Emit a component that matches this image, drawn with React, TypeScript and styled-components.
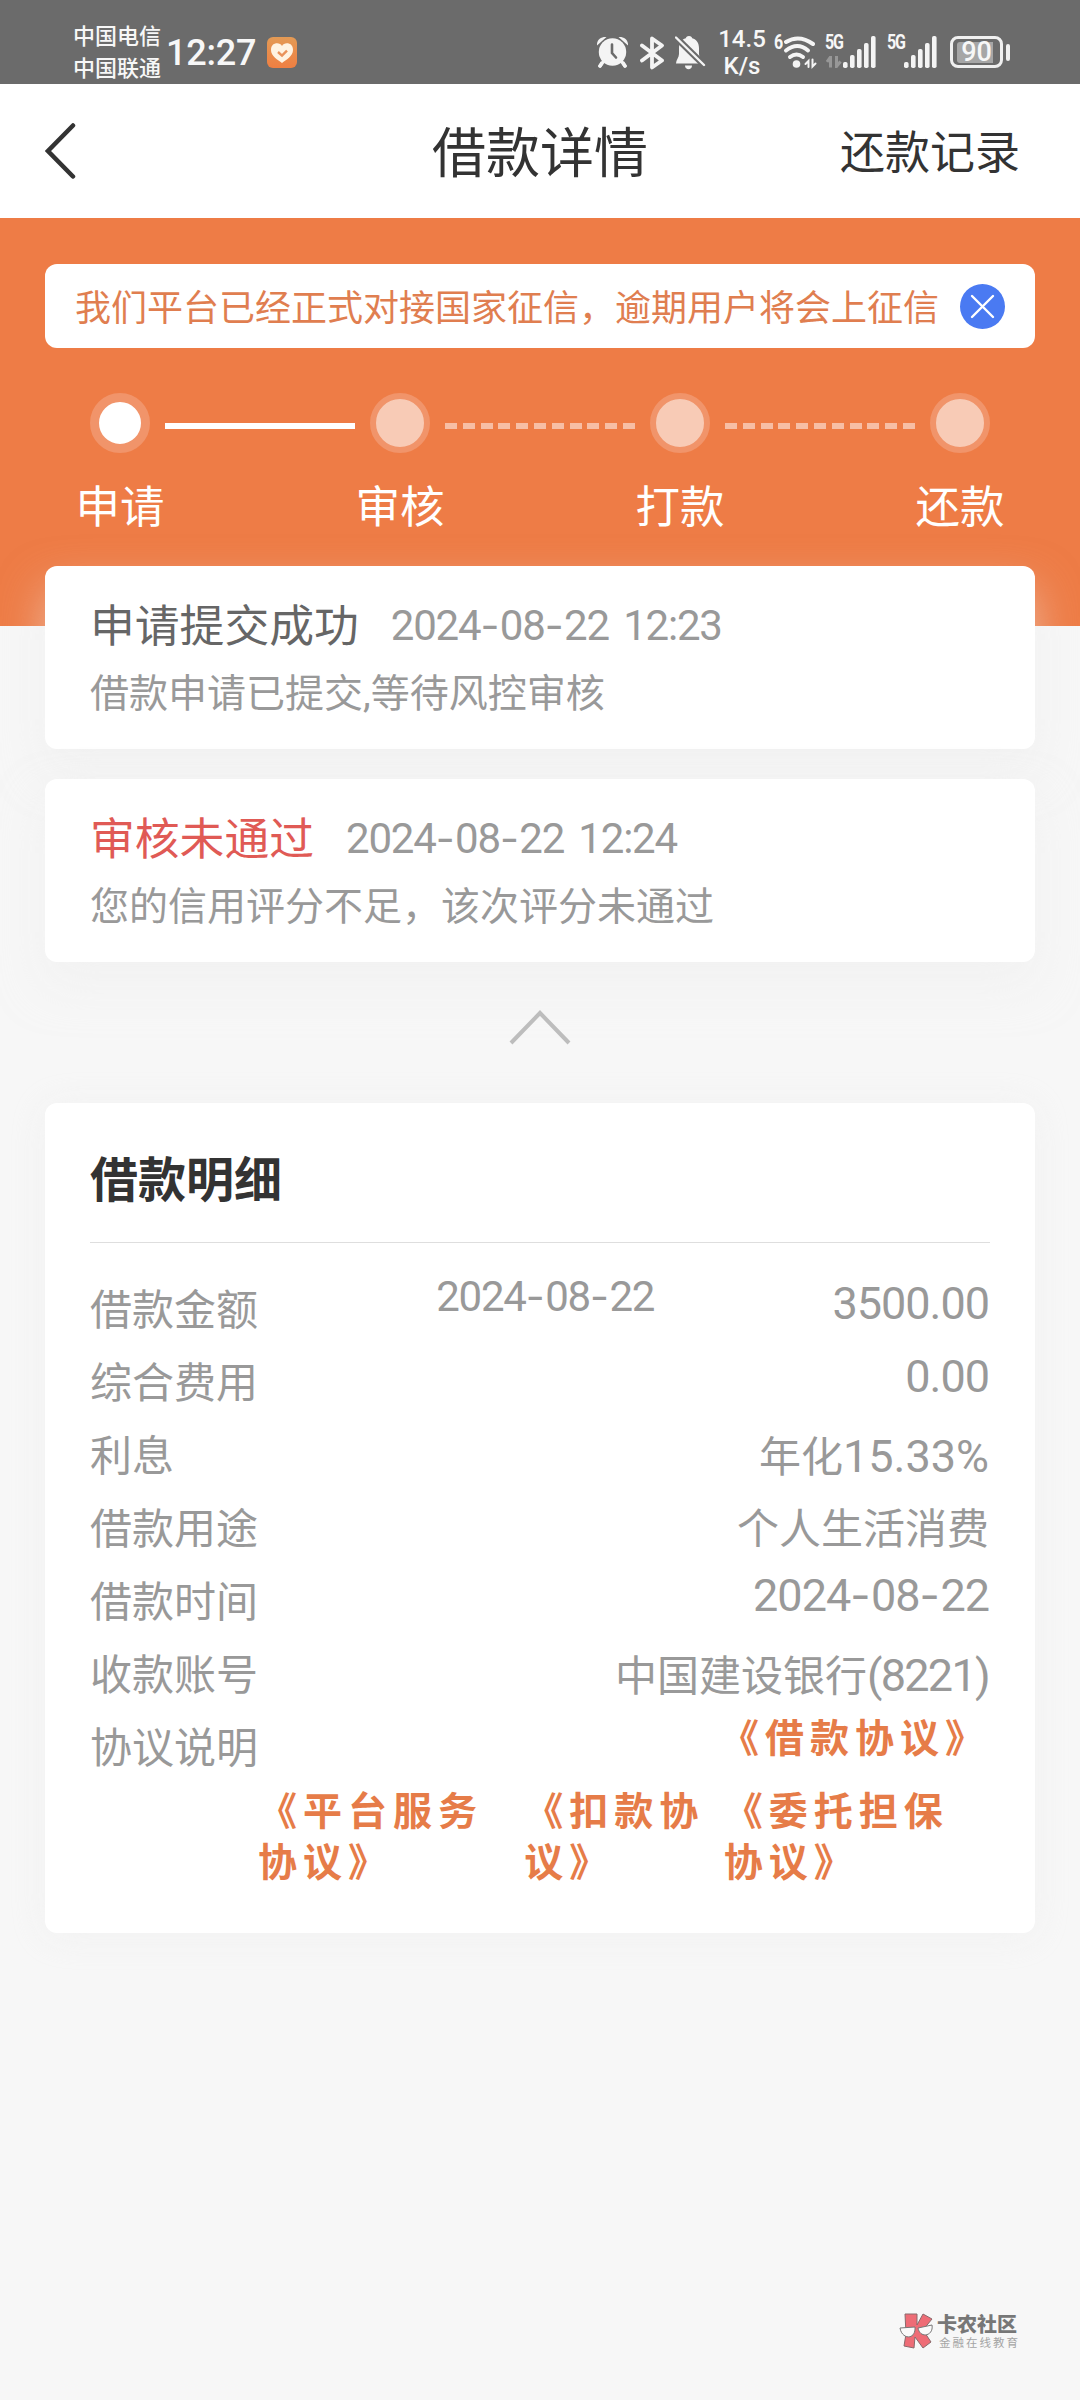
import React from "react";
import styled, { createGlobalStyle } from "styled-components";

const GlobalStyle = createGlobalStyle`
  * { box-sizing: border-box; }
  body {
    margin: 0;
    background: #f7f7f7;
    font-family: Roboto, "Noto Sans CJK SC", sans-serif;
    -webkit-font-smoothing: antialiased;
  }
`;

const Page = styled.div`
  width: 1080px;
  height: 2400px;
  display: flex;
  flex-direction: column;
  background: #f7f7f7;
  overflow: hidden;
`;

/* ---------- status bar ---------- */

const StatusBar = styled.header`
  height: 84px;
  flex: none;
  display: flex;
  align-items: flex-start;
  padding: 0 70px 0 73px;
  background: #6b6b6b;
  color: #f7f7f7;
`;

const Carriers = styled.div`
  display: flex;
  flex-direction: column;
  width: 93px;
  padding-top: 18px;
  font: 500 22px/32px "Noto Sans CJK SC", sans-serif;
  white-space: nowrap;
`;

const Clock = styled.div`
  width: 101px;
  padding-top: 33px;
  font-size: 36px;
  font-weight: 500;
  line-height: 40px;
  letter-spacing: -0.2px;
  white-space: nowrap;
`;

const StatusIcon = styled.svg<{ $top?: number; $left?: number }>`
  display: block;
  flex: none;
  margin-top: ${(p) => p.$top ?? 36}px;
  margin-left: ${(p) => p.$left ?? 0}px;
`;

const StatusIcons = styled.div`
  display: flex;
  align-items: flex-start;
  margin-left: auto;
`;

const Speed = styled.div`
  width: 50px;
  margin-left: 11px;
  padding-top: 26px;
  font-size: 24px;
  font-weight: 500;
  line-height: 27px;
  text-align: center;
  white-space: nowrap;
`;

const NetTag = styled.div<{ $width: number; $left: number }>`
  width: ${(p) => p.$width}px;
  margin: 34px 0 0 ${(p) => p.$left}px;
  font-size: 16px;
  line-height: 18px;
  font-weight: 700;
  letter-spacing: -1.2px;
  white-space: nowrap;
  transform: scaleY(1.25);
`;

const TagColumn = styled.div`
  display: flex;
  flex-direction: column;
`;

const Battery = styled.div`
  display: flex;
  align-items: center;
  justify-content: center;
  width: 53px;
  height: 32px;
  margin: 36px 3px 0 13px;
  border: 3px solid #f0f0f0;
  border-radius: 8px;
  font-size: 27px;
  font-weight: 500;
  line-height: 27px;
`;

const BatteryFill = styled.span`
  display: flex;
  align-items: center;
  justify-content: center;
  width: 39px;
  height: 21px;
  border-radius: 3px;
  background: linear-gradient(90deg, #a6a6a6 92%, transparent 92%);
`;

const BatteryTip = styled.div`
  width: 4px;
  height: 17px;
  margin-top: 44px;
  border-radius: 2px;
  background: #f0f0f0;
`;

/* ---------- navigation ---------- */

const NavBar = styled.nav`
  height: 134px;
  flex: none;
  display: grid;
  grid-template-columns: 300px 1fr 300px;
  align-items: center;
  background: #fff;
  color: #333;
`;

const BackButton = styled.button`
  display: flex;
  padding: 0 0 0 45px;
  border: 0;
  background: none;
`;

const NavTitle = styled.h1`
  margin: 0;
  padding-top: 7px;
  font-weight: 400;
  font-size: 54px;
  line-height: 60px;
  text-align: center;
`;

const NavLink = styled.a`
  padding: 6px 60px 0 0;
  font-size: 45px;
  line-height: 60px;
  text-align: right;
`;

/* ---------- hero ---------- */

const Hero = styled.section`
  height: 408px;
  flex: none;
  padding: 46px 45px 0;
  background: #ee7c46;
`;

const Notice = styled.div`
  display: flex;
  align-items: center;
  justify-content: space-between;
  height: 84px;
  padding: 0 30px;
  border-radius: 12px;
  background: #fff;
  color: #e07e50;
  font-size: 36px;
  line-height: 50px;
  white-space: nowrap;
`;

const NoticeText = styled.span`
  padding-top: 5px;
`;

const Steps = styled.div`
  display: flex;
  align-items: flex-start;
  padding: 45px 45px 0;
`;

const Step = styled.div`
  display: flex;
  flex-direction: column;
  align-items: center;
  width: 60px;
`;

const StepDot = styled.div<{ $active?: boolean }>`
  width: 60px;
  height: 60px;
  border-radius: 50%;
  border: ${(p) => (p.$active ? 9 : 6)}px solid #f1946a;
  background: ${(p) => (p.$active ? "#fff" : "#f8cbb6")};
`;

const StepLabel = styled.div`
  margin-top: 25px;
  color: #fff;
  font-size: 44.5px;
  line-height: 60px;
  white-space: nowrap;
`;

const StepLine = styled.div<{ $active?: boolean }>`
  width: 190px;
  height: 6px;
  margin: 30px 15px 0;
  background: ${(p) =>
    p.$active
      ? "#fff"
      : "repeating-linear-gradient(90deg, #f7bea5 0 12px, transparent 12px 17.8px)"};
`;

/* ---------- progress records ---------- */

const Records = styled.section`
  display: flex;
  flex-direction: column;
  gap: 30px;
  margin: -60px 45px 0;
`;

const cardShadow = "0 22px 45px rgba(238, 238, 238, 0.5)";

const RecordCard = styled.article`
  height: 183px;
  padding: 32px 45px 0;
  border-radius: 12px;
  background: #fff;
  box-shadow: ${cardShadow};
`;

const RecordHead = styled.div`
  display: flex;
  align-items: center;
  gap: 32px;
  height: 54px;
`;

const RecordTitle = styled.h2<{ $failed?: boolean }>`
  margin: 0;
  padding-top: 3px;
  font-weight: 400;
  font-size: 44.8px;
  line-height: 54px;
  color: ${(p) => (p.$failed ? "#e05a55" : "#666")};
`;

const Stamp = styled.time`
  font-size: 42px;
  line-height: 48px;
  letter-spacing: -1.2px;
  word-spacing: 5px;
  color: #999;
  white-space: nowrap;
`;

const Dash = styled.span`
  font-family: Inter, sans-serif;
  font-weight: 400;
  font-size: 0.98em;
  letter-spacing: 0.5px;
`;

const RecordText = styled.p`
  margin: 18px 0 0;
  color: #999;
  font-size: 39px;
  line-height: 48px;
  white-space: nowrap;
`;

const Collapse = styled.div`
  display: flex;
  justify-content: center;
  height: 141px;
  padding-top: 48px;
`;

/* ---------- loan details ---------- */

const DetailCard = styled.section`
  height: 830px;
  margin: 0 45px;
  padding: 0 45px;
  border-radius: 12px;
  background: #fff;
  box-shadow: 0 3px 36px rgba(238, 238, 238, 0.6);
`;

const DetailTitle = styled.h2`
  height: 140px;
  margin: 0 0 29px;
  padding-top: 40px;
  border-bottom: 1px solid #dedede;
  color: #333;
  font: 700 48px/66px "Noto Sans CJK SC", sans-serif;
`;

const Row = styled.div`
  display: flex;
  align-items: flex-start;
  justify-content: space-between;
  height: 73px;
  color: #999;
`;

const Label = styled.div`
  width: 168px;
  flex: none;
  font-size: 42px;
  line-height: 78px;
  white-space: nowrap;
`;

const Value = styled.div<{ $numeric?: boolean }>`
  padding-right: 1px;
  font-size: 42px;
  line-height: ${(p) => (p.$numeric ? 63 : 77)}px;
  white-space: nowrap;
`;

const Num = styled.span<{ $track?: number }>`
  font-size: 45px;
  letter-spacing: ${(p) => p.$track ?? -1}px;
`;

const Agreement = styled.a`
  color: #e67c48;
  font: 700 39px/51px "Noto Sans CJK SC", sans-serif;
  letter-spacing: 6px;
`;

const AgreementRow = styled.div`
  display: flex;
  padding-left: 168px;
`;

const AgreementCell = styled.div<{ $basis: number }>`
  flex: 0 1 ${(p) => p.$basis}px;
  min-width: 0;
`;

/* ---------- watermark ---------- */

const Watermark = styled.footer`
  display: flex;
  gap: 2px;
  margin: auto 60px 51px auto;
`;

const BrandText = styled.div`
  display: flex;
  flex-direction: column;
  white-space: nowrap;
`;

const BrandName = styled.div`
  color: #777;
  font: 900 20px/22px "Noto Sans CJK SC", sans-serif;
`;

const BrandSlogan = styled.div`
  padding-left: 2px;
  color: #a5a5a5;
  font: 400 11.5px/14px "Noto Sans CJK SC", sans-serif;
  letter-spacing: 2px;
`;

const INK = "#f4f4f4";

const DateText = ({ value }: { value: string }) => (
  <>
    {value.split("-").map((part, i) => (
      <React.Fragment key={i}>
        {i > 0 && <Dash>-</Dash>}
        {part}
      </React.Fragment>
    ))}
  </>
);

const SignalBars = ({ left }: { left: number }) => (
  <StatusIcon width="33" height="32" $left={left} fill={INK}>
    {[6, 13, 19, 25, 32].map((h, i) => (
      <rect key={h} x={i * 7} y={32 - h} width="4.6" height={h} rx="1.8" />
    ))}
  </StatusIcon>
);

const steps = ["申请", "审核", "打款", "还款"];

const records = [
  { title: "申请提交成功", time: "2024-08-22 12:23", text: "借款申请已提交,等待风控审核" },
  { title: "审核未通过", time: "2024-08-22 12:24", text: "您的信用评分不足，该次评分未通过", failed: true },
];

export default function App() {
  return (
    <Page>
      <GlobalStyle />
      <StatusBar>
        <Carriers>
          <span>中国电信</span>
          <span>中国联通</span>
        </Carriers>
        <Clock>12:27</Clock>
        <StatusIcon width="30" height="31" $top={37}>
          <defs>
            <linearGradient id="badge" x1="0" y1="0" x2="0" y2="1">
              <stop offset="0" stopColor="#e39a55" />
              <stop offset="1" stopColor="#ef7f42" />
            </linearGradient>
          </defs>
          <rect width="30" height="31" rx="6" fill="url(#badge)" />
          <path d="M15 9C13 5 4 5 4 13c0 6 7 10 11 13 4-3 11-7 11-13 0-8-9-8-11-4z" fill="#fff3e2" />
          <path d="M11 15l4 3.6 5-5" fill="none" stroke="#e9925a" strokeWidth="2.4" />
        </StatusIcon>
        <StatusIcons>
          <StatusIcon width="31" height="32" viewBox="0 0 31 32">
            <path d="M5.500 26l-2.500 4M25.500 26l2.500 4" stroke={INK} strokeWidth="3.400" strokeLinecap="round" />
            <path d="M0 9.500C-.5 4 4 .5 9.500 1L0 9.500zM31 9.500C31.500 4 27 .5 21.500 1L31 9.500z" fill={INK} />
            <circle cx="15.500" cy="16.500" r="14.800" fill="#6b6b6b" />
            <path d="M6 26l-3 4M25 26l3 4" stroke={INK} strokeWidth="3.400" strokeLinecap="round" />
            <circle cx="15.500" cy="16" r="13.700" fill={INK} />
            <path d="M15 8.500V17l4 4.500" fill="none" stroke="#6b6b6b" strokeWidth="2.600" strokeLinecap="round" />
          </StatusIcon>
          <StatusIcon width="24" height="34" viewBox="0 0 24 34" $left={12}>
            <path
              d="M2 9.500l20 15-10 7V2.500l10 7-20 15"
              fill="none"
              stroke={INK}
              strokeWidth="3.800"
              strokeLinejoin="round"
              strokeLinecap="round"
            />
          </StatusIcon>
          <StatusIcon width="31" height="34" viewBox="0 0 31 34" $left={11}>
            <path d="M14 0c2 0 3 1 3.200 2.300C21.500 3.500 24 7 24 12v6c0 3.500 2.500 6 3 9.500H1C1 24 4 21.500 4 18v-6c0-5 2.500-8.500 6.800-9.700C11 1 12 0 14 0z" fill={INK} />
            <path d="M10 29.500h7c0 5-7 5-7 0z" fill={INK} />
            <path d="M1 1.500l28 27.500" stroke="#6b6b6b" strokeWidth="6.500" />
            <path d="M1 1.500l28 27.500" stroke={INK} strokeWidth="2.400" strokeLinecap="round" />
          </StatusIcon>
          <Speed>
            14.5
            <br />
            K/s
          </Speed>
          <NetTag $width={9} $left={7}>6</NetTag>
          <StatusIcon width="34" height="33" viewBox="0 0 34 33">
            <g fill="none" stroke={INK} strokeLinecap="round">
              <path d="M3 6q13-8 27 2" strokeWidth="4" />
              <path d="M3 14.500q11.500-9 22 0" strokeWidth="4" />
              <path d="M7 21q6.500-5 13 0" strokeWidth="4" />
              <path d="M25.500 31v-6l-3 3M29.500 23.500v7l3-3" strokeWidth="2" />
            </g>
            <circle cx="13.500" cy="28" r="3.800" fill={INK} />
          </StatusIcon>
          <TagColumn>
            <NetTag $width={18} $left={8}>5G</NetTag>
            <StatusIcon width="16" height="12" $top={4} $left={9} stroke="#979797" strokeWidth="3" fill="none">
              <path d="M4.500 11.500V1L1 6M10.500 0v10.500l4-5" />
            </StatusIcon>
          </TagColumn>
          <SignalBars left={0} />
          <NetTag $width={18} $left={11}>5G</NetTag>
          <SignalBars left={-1} />
          <Battery>
            <BatteryFill>90</BatteryFill>
          </Battery>
          <BatteryTip />
        </StatusIcons>
      </StatusBar>

      <NavBar>
        <BackButton aria-label="返回">
          <svg width="32" height="56" viewBox="0 0 32 56" fill="none" stroke="#333" strokeWidth="4.500" strokeLinecap="round">
            <path d="M28 2.500L3 28l25 25.500" />
          </svg>
        </BackButton>
        <NavTitle>借款详情</NavTitle>
        <NavLink>还款记录</NavLink>
      </NavBar>

      <Hero>
        <Notice>
          <NoticeText>我们平台已经正式对接国家征信，逾期用户将会上征信</NoticeText>
          <svg width="45" height="45" viewBox="0 0 45 45">
            <circle cx="22.500" cy="22.500" r="22.500" fill="#4a7af2" />
            <path d="M12 12l21 21M33 12L12 33" stroke="#fff" strokeWidth="2.400" strokeLinecap="round" />
          </svg>
        </Notice>
        <Steps>
          {steps.map((name, i) => (
            <React.Fragment key={name}>
              {i > 0 && <StepLine $active={i === 1} />}
              <Step>
                <StepDot $active={i === 0} />
                <StepLabel>{name}</StepLabel>
              </Step>
            </React.Fragment>
          ))}
        </Steps>
      </Hero>

      <Records>
        {records.map((r) => (
          <RecordCard key={r.title}>
            <RecordHead>
              <RecordTitle $failed={r.failed}>{r.title}</RecordTitle>
              <Stamp>
                <DateText value={r.time} />
              </Stamp>
            </RecordHead>
            <RecordText>{r.text}</RecordText>
          </RecordCard>
        ))}
      </Records>

      <Collapse>
        <svg width="62" height="36" viewBox="0 0 62 36" fill="none" stroke="#bdbdbd" strokeWidth="4">
          <path d="M2 33L31 3l29 30" />
        </svg>
      </Collapse>

      <DetailCard>
        <DetailTitle>借款明细</DetailTitle>
        <Row>
          <Label>借款金额</Label>
          <Stamp>
            <DateText value="2024-08-22" />
          </Stamp>
          <Value $numeric><Num>3500.00</Num></Value>
        </Row>
        <Row>
          <Label>综合费用</Label>
          <Value $numeric><Num>0.00</Num></Value>
        </Row>
        <Row>
          <Label>利息</Label>
          <Value>年化<Num $track={0}>15.33%</Num></Value>
        </Row>
        <Row>
          <Label>借款用途</Label>
          <Value>个人生活消费</Value>
        </Row>
        <Row>
          <Label>借款时间</Label>
          <Value $numeric><Num><DateText value="2024-08-22" /></Num></Value>
        </Row>
        <Row>
          <Label>收款账号</Label>
          <Value>中国建设银行<Num $track={-1.7}>(8221)</Num></Value>
        </Row>
        <Row>
          <Label>协议说明</Label>
          <Agreement>《借款协议》</Agreement>
        </Row>
        <AgreementRow>
          <AgreementCell $basis={360}>
            <Agreement>《平台服务协议》</Agreement>
          </AgreementCell>
          <AgreementCell $basis={270}>
            <Agreement>《扣款协议》</Agreement>
          </AgreementCell>
          <AgreementCell $basis={360}>
            <Agreement>《委托担保协议》</Agreement>
          </AgreementCell>
        </AgreementRow>
      </DetailCard>

      <Watermark>
        <svg width="36" height="36" viewBox="0 0 36 36" stroke="#8a6a6c" strokeWidth="1">
          <path d="M6 1h12v11l6-11 9 5-9 11 8 12-8 6-8-11-1 11-10-2 2-12z" fill="#ee6c76" />
          <path d="M1 15l15-1c1 13-13 13-15 1zM19 15l14-3c2 11-12 14-14 3z" fill="#fafafa" stroke="#777" />
        </svg>
        <BrandText>
          <BrandName>卡农社区</BrandName>
          <BrandSlogan>金融在线教育</BrandSlogan>
        </BrandText>
      </Watermark>
    </Page>
  );
}
